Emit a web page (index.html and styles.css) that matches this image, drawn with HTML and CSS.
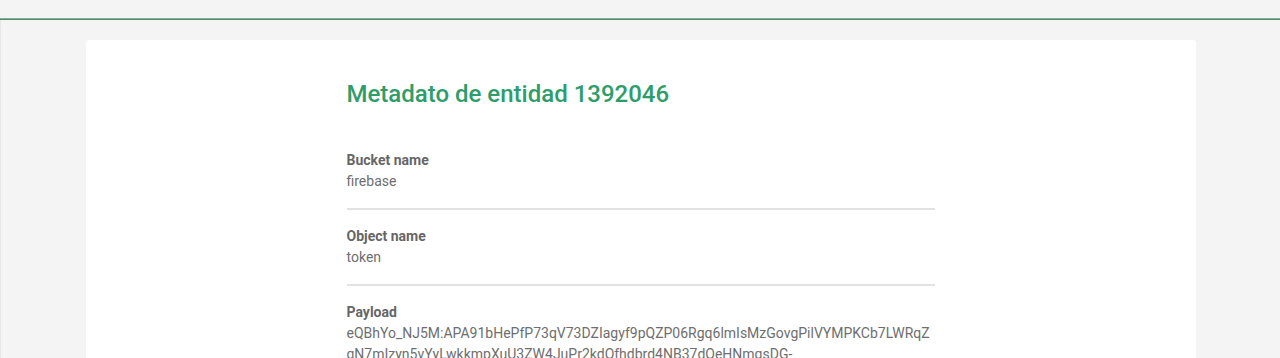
FILE: index.html
```html
<!DOCTYPE html>
<html lang="es">
<head>
  <meta charset="UTF-8" />
  <title>Metadato de entidad</title>
  <link rel="stylesheet" href="styles.css">
</head>
<body>
  <header class="topbar"></header>

  <main class="page">
    <section class="card">
      <div class="content">
        <h1 class="title">Metadato de entidad 1392046</h1>

        <div class="field">
          <div class="field-label">Bucket name</div>
          <div class="field-value">firebase</div>
        </div>

        <div class="field">
          <div class="field-label">Object name</div>
          <div class="field-value">token</div>
        </div>

        <div class="field">
          <div class="field-label">Payload</div>
          <div class="field-value payload">eQBhYo_NJ5M:APA91bHePfP73qV73DZIagyf9pQZP06Rgq6lmIsMzGovgPilVYMPKCb7LWRqZgN7mIzyn5vYyLwkkmpXuU3ZW4JuPr2kdOfhdbrd4NB37dOeHNmgsDG-x3Rk8TpLq2WvHs0aYcEuNfJdBi7oQmZtVrKgl5XwPe9nAhS</div>
        </div>
      </div>
    </section>
  </main>
</body>
</html>
```

FILE: styles.css
```css
html, body {
  margin: 0;
  padding: 0;
  background: #f4f4f4;
  font-family: Roboto, 'Noto Sans', sans-serif;
  color: #666;
}

.topbar {
  height: 19px;
  background: #f4f4f4;
  border-bottom: 1px solid #3a9a6a;
  box-shadow: inset 0 -1px 0 #9e9e9e;
}

.page {
  border-left: 1px solid #e6e6e6;
  padding-top: 20px;
  min-height: 400px;
}

.card {
  width: 1110px;
  margin: 0 auto;
  background: #fff;
  border-radius: 3px;
  padding: 40px 0;
}

.content {
  width: 588px;
  margin: 0 auto;
}

.title {
  margin: 0 0 42px 0;
  font-size: 24px;
  font-weight: 500;
  line-height: normal;
  color: #2e9d6b;
}

.field {
  padding: 16px 0;
  border-bottom: 2px solid #e2e2e2;
  font-size: 14px;
  line-height: 21px;
}

.field:first-of-type {
  padding-top: 0;
}

.field-label {
  font-weight: bold;
  color: #666;
}

.field-value {
  color: #6e6e6e;
}

.payload {
  overflow-wrap: break-word;
}
```
